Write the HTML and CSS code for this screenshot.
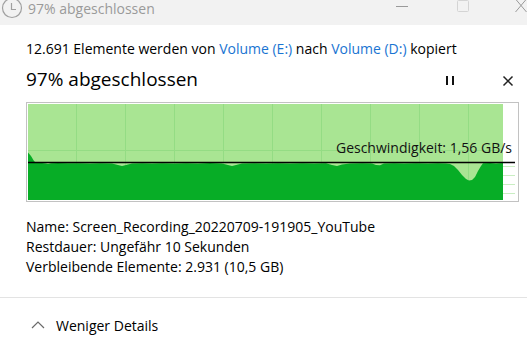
FILE: index.html
```html
<!DOCTYPE html>
<html lang="de">
<head>
<meta charset="utf-8">
<title>97% abgeschlossen</title>
<link rel="stylesheet" href="styles.css">
</head>
<body>
<div class="titlebar">
  <svg class="clock" width="24" height="22" viewBox="0 0 24 22">
    <circle cx="12" cy="9" r="9.5" fill="none" stroke="#a0a0a0" stroke-width="1.2"/>
    <path d="M11.5 4 V10.5 H16" fill="none" stroke="#a0a0a0" stroke-width="1.2"/>
  </svg>
  <span class="wtitle">97% abgeschlossen</span>
  <div class="wcontrols">
    <svg class="wmin" width="12" height="12" viewBox="0 0 12 12"><path d="M0 6.5 H12" stroke="#9a9a9a" stroke-width="1"/></svg>
    <svg class="wmax" width="12" height="12" viewBox="0 0 12 12"><rect x="0.5" y="0.5" width="11" height="11" rx="1" fill="none" stroke="#d4d4d4" stroke-width="1"/></svg>
    <svg class="wclose" width="12" height="14" viewBox="0 0 12 14"><path d="M0.5 0 L11.5 13 M11.5 0 L0.5 13" stroke="#9a9a9a" stroke-width="1"/></svg>
  </div>
</div>

<main class="content">
  <p class="summary">12.691 Elemente werden von <span class="link">Volume (E:)</span> nach <span class="link">Volume (D:)</span> kopiert</p>
  <div class="headline">
    <h1 class="percent">97% abgeschlossen</h1>
    <div class="actions">
      <svg class="pause" width="10" height="10" viewBox="0 0 10 10"><rect x="1" y="0" width="2" height="9" fill="#111"/><rect x="7" y="0" width="2" height="9" fill="#111"/></svg>
      <svg class="cancel" width="12" height="12" viewBox="0 0 12 12"><path d="M1.5 1.5 L10.5 10.5 M10.5 1.5 L1.5 10.5" stroke="#222" stroke-width="1.5"/></svg>
    </div>
  </div>

  <div class="chart">
    <svg class="chart-svg" width="487" height="96" viewBox="0 0 487 96">
      <rect x="0" y="0" width="475" height="96" fill="#a9e593"/>
      <g stroke="#94dc84" stroke-width="1">
        <path d="M48.5 0 V96 M97.5 0 V96 M146.5 0 V96 M195.5 0 V96 M244.5 0 V96 M293.5 0 V96 M342.5 0 V96 M391.5 0 V96 M440.5 0 V96"/>
        <path d="M0 46.5 H475"/>
      </g>
      <g stroke="#c9eec2" stroke-width="1">
        <path d="M475 62.5 H487 M475 71.5 H487 M475 80.5 H487 M475 89.5 H487"/>
      </g>
      <polygon fill="#07ad26" points="0,48.5 3,52 6,57 8,58.8 14,59 18,59.4 20,60 23,59.3 30,59 40,59.2 52,59.3 62,59.5 72,59.2 84,59.6 90,61 94,62 98,61 104,59.6 114,59.2 124,59.6 134,59.2 146,59.5 158,59.2 170,59.4 182,59 194,59.6 200,61 204,62 208,61 214,59.5 226,59.3 238,59.5 250,59.2 262,59.4 274,59.2 286,59.4 298,59.3 304,61 309,62 314,60.5 322,59.4 334,59.2 344,59.6 348,61 352,61.2 356,59.6 366,59.2 376,59.5 388,59.3 400,59.4 410,59.2 418,59.5 422,60 426,62 430,66 434,71 438,75 441,76.5 444,76 447,73 450,67 453,62 455,59.2 462,59 468,59.4 475,59 475,96 0,96"/>
      <path d="M0 58.5 H487" stroke="#000" stroke-width="1.3"/>
      <text class="speed" x="484" y="49" text-anchor="end">Geschwindigkeit: 1,56 GB/s</text>
    </svg>
  </div>

  <div class="details">
    <p>Name: Screen_Recording_20220709-191905_YouTube</p>
    <p>Restdauer: Ungefähr 10 Sekunden</p>
    <p>Verbleibende Elemente: 2.931 (10,5 GB)</p>
  </div>
</main>

<div class="separator"></div>

<footer class="footer">
  <svg class="chevron" width="14" height="8" viewBox="0 0 14 8"><path d="M1 7 L7 1 L13 7" fill="none" stroke="#6a6a6a" stroke-width="1.2"/></svg>
  <span class="more">Weniger Details</span>
</footer>
</body>
</html>
```

FILE: styles.css
```css
html, body {
  margin: 0;
  padding: 0;
  background: #ffffff;
}
body {
  width: 527px;
  height: 347px;
  overflow: hidden;
  font-family: "Open Sans", "Noto Sans", sans-serif;
  font-size: 14px;
  color: #000;
}
p { margin: 0; }

.titlebar {
  height: 25px;
  background: #f2f2f2;
  display: flex;
  align-items: flex-start;
  position: relative;
}
.clock {
  margin-top: -1px;
  flex: none;
}
.wtitle {
  margin-left: 4px;
  font-size: 14px;
  line-height: 17px;
  color: #9a9a9a;
  margin-top: 0;
}
.wcontrols {
  margin-left: auto;
  display: flex;
  align-items: flex-start;
}
.wmin { margin-top: 0; }
.wmax { margin-left: 49px; margin-top: 0; }
.wclose { margin-left: 46px; margin-top: -1px; margin-right: 0; }

.content {
  padding: 14px 9px 0 26px;
}
.summary {
  line-height: 20px;
}
.link { color: #1a74d2; }

.headline {
  margin-top: 7px;
  display: flex;
  align-items: center;
  height: 26px;
}
.percent {
  margin: 0;
  font-size: 19px;
  font-weight: normal;
  line-height: 26px;
}
.actions {
  margin-left: auto;
  display: flex;
  align-items: center;
  margin-right: 4px;
  margin-top: 3px;
}
.cancel { margin-left: 47px; }

.chart {
  margin-top: 10px;
  width: 489px;
  border: 1px solid #c2c2c2;
  padding: 1px;
  line-height: 0;
}
.chart-svg { display: block; }
.speed {
  font-family: "Open Sans", "Noto Sans", sans-serif;
  font-size: 14px;
  fill: #111;
}

.details {
  margin-top: 15px;
}
.details p {
  line-height: 20px;
}

.separator {
  margin-top: 20px;
  height: 1px;
  background: #e3e3e3;
}

.footer {
  margin-top: 18px;
  display: flex;
  align-items: center;
  padding-left: 31px;
  line-height: 20px;
}
.chevron { flex: none; margin-top: -2px; }
.more { margin-left: 11px; }
```
